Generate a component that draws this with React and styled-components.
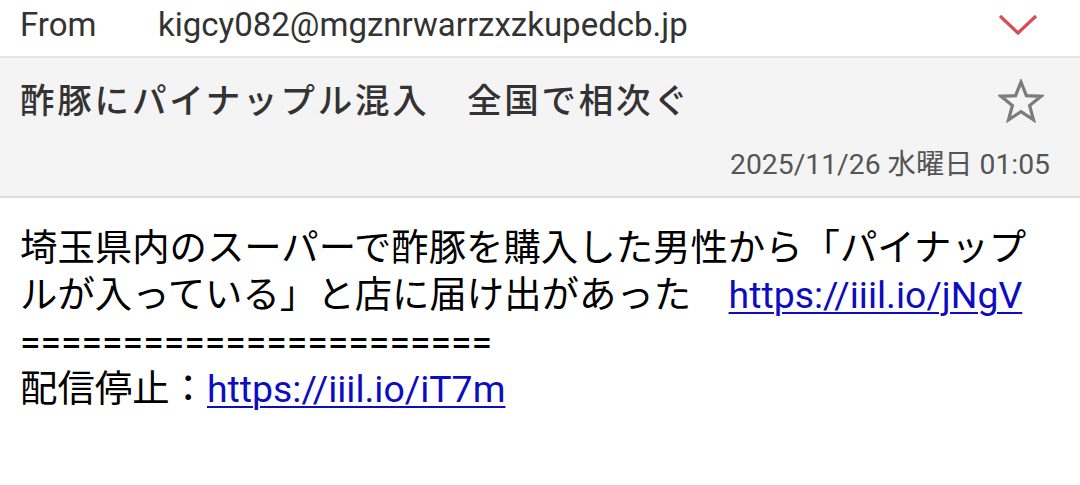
import styled, { createGlobalStyle } from "styled-components";

const GlobalStyle = createGlobalStyle`
  html, body {
    margin: 0;
    padding: 0;
    background: #ffffff;
  }
  body {
    font-family: Roboto, "Noto Sans CJK JP", sans-serif;
  }
`;

const Page = styled.div`
  width: 1080px;
  height: 485px;
  overflow: hidden;
  background: #ffffff;
`;

const FromRow = styled.div`
  height: 58px;
  display: flex;
  align-items: center;
  padding: 0 42px 8px 20px;
  box-sizing: border-box;
  border-bottom: 2px solid #e4e4e4;
  font-size: 33px;
  color: #333333;
`;

const FromLabel = styled.span`
  width: 138px;
`;

const Address = styled.span`
  flex: 1;
`;

const SubjectPanel = styled.div`
  height: 138px;
  background: #f4f4f4;
  border-bottom: 2px solid #dcdcdc;
  padding: 0 36px 0 20px;
  box-sizing: content-box;
  display: flex;
  flex-direction: column;
`;

const SubjectRow = styled.div`
  display: flex;
  align-items: center;
  justify-content: space-between;
  padding-top: 14px;
  height: 58px;
`;

const Subject = styled.h1`
  margin: 0;
  margin-top: -6px;
  font-family: "Noto Sans CJK JP", sans-serif;
  font-size: 34.5px;
  font-weight: 500;
  color: #333333;
  letter-spacing: 2.8px;
`;

const DateLine = styled.div`
  margin-top: auto;
  margin-right: -6px;
  padding-bottom: 14px;
  align-self: flex-end;
  font-size: 28.3px;
  color: #555555;
`;

const Body = styled.div`
  padding: 27px 36px 0 20px;
  font-family: Roboto, "Noto Sans CJK JP", sans-serif;
  font-size: 37.4px;
  line-height: 47px;
  color: #000000;
`;

const Link = styled.a`
  color: #0d0dbf;
  text-decoration: underline;
  text-decoration-thickness: 2px;
  text-underline-offset: 4px;
  white-space: nowrap;
`;

const Line = styled.div``;

const Chevron = () => (
  <svg width="40" height="24" viewBox="0 0 40 24">
    <path
      d="M2 4 L20 21 L38 4"
      fill="none"
      stroke="#d84e4e"
      strokeWidth="3.2"
      strokeLinejoin="miter"
    />
  </svg>
);

const Star = () => (
  <svg width="46" height="44" viewBox="0 0 46 44">
    <path
      d="M23 3 L28.4 16.6 L43 17.3 L31.6 26.5 L35.5 40.8 L23 32.7 L10.5 40.8 L14.4 26.5 L3 17.3 L17.6 16.6 Z"
      fill="none"
      stroke="#7c7c7c"
      strokeWidth="3.2"
      strokeLinejoin="miter"
    />
  </svg>
);

export default function App() {
  return (
    <Page>
      <GlobalStyle />
      <FromRow>
        <FromLabel>From</FromLabel>
        <Address>kigcy082@mgznrwarrzxzkupedcb.jp</Address>
        <Chevron />
      </FromRow>
      <SubjectPanel>
        <SubjectRow>
          <Subject>酢豚にパイナップル混入{"\u3000"}全国で相次ぐ</Subject>
          <Star />
        </SubjectRow>
        <DateLine>2025/11/26 水曜日 01:05</DateLine>
      </SubjectPanel>
      <Body>
        <Line>
          埼玉県内のスーパーで酢豚を購入した男性から「パイナップルが入っている」と店に届け出があった
          {"\u3000"}
          <Link href="#">https://iiil.io/jNgV</Link>
        </Line>
        <Line>=======================</Line>
        <Line>
          配信停止：<Link href="#">https://iiil.io/iT7m</Link>
        </Line>
      </Body>
    </Page>
  );
}
